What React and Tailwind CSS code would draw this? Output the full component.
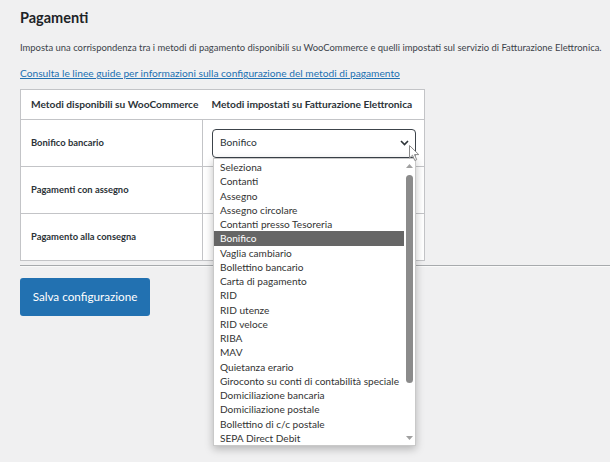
import React from "react";

const OPTIONS = [
  "Seleziona",
  "Contanti",
  "Assegno",
  "Assegno circolare",
  "Contanti presso Tesoreria",
  "Bonifico",
  "Vaglia cambiario",
  "Bollettino bancario",
  "Carta di pagamento",
  "RID",
  "RID utenze",
  "RID veloce",
  "RIBA",
  "MAV",
  "Quietanza erario",
  "Giroconto su conti di contabilità speciale",
  "Domiciliazione bancaria",
  "Domiciliazione postale",
  "Bollettino di c/c postale",
  "SEPA Direct Debit",
];

const ROWS = ["Bonifico bancario", "Pagamenti con assegno", "Pagamento alla consegna"];

function Dropdown() {
  return (
    <div className="absolute left-[10px] top-[38px] z-20 flex w-[203px] border border-[#c9c9c9] bg-white shadow-[0_3px_8px_rgba(0,0,0,0.25)]">
      <ul className="flex-1 pt-px">
        {OPTIONS.map((o) => (
          <li
            key={o}
            className={`flex h-[14.25px] items-center whitespace-nowrap pl-[6px] text-[10.1px] leading-none ${
              o === "Bonifico" ? "bg-[#666666] text-white" : "text-[#333]"
            }`}
          >
            {o}
          </li>
        ))}
      </ul>
      {/* scrollbar */}
      <div className="flex w-[11px] flex-col items-center py-[5px]">
        <svg width="7" height="4" viewBox="0 0 7 4">
          <path d="M0 4 L3.5 0 L7 4 Z" fill="#a0a0a0" />
        </svg>
        <div className="mt-[7px] h-[208px] w-[7px] rounded-full bg-[#8b8b8b]" />
        <div className="flex-1" />
        <svg width="7" height="4" viewBox="0 0 7 4">
          <path d="M0 0 L3.5 4 L7 0 Z" fill="#a0a0a0" />
        </svg>
      </div>
    </div>
  );
}

export default function App() {
  return (
    <div className="relative h-[462px] w-[610px] overflow-hidden bg-[#f0f0f1] font-['Lato',sans-serif] text-[#1d2327]">
      <div className="px-5 pt-[6px]">
        <h2 className="text-[14.5px] font-bold leading-[24px]">Pagamenti</h2>
        <p className="mt-[10px] whitespace-nowrap text-[9.45px] leading-[16px] text-[#3c434a]">
          Imposta una corrispondenza tra i metodi di pagamento disponibili su WooCommerce e quelli impostati sul servizio di Fatturazione Elettronica.
        </p>
        <a href="#" className="mt-[9px] block whitespace-nowrap text-[10.2px] leading-[16px] text-[#2271b1] underline">
          Consulta le linee guide per informazioni sulla configurazione del metodi di pagamento
        </a>

        <table className="mt-[8px] w-[405px] table-fixed border-collapse border border-[#c3c4c7] bg-white">
          <thead>
            <tr className="h-[30px] border-b border-[#c3c4c7]">
              <th className="w-[182px] whitespace-nowrap pl-[10px] text-left text-[10.2px] font-bold text-[#2c3338]">
                Metodi disponibili su WooCommerce
              </th>
              <th className="whitespace-nowrap pl-[9px] text-left text-[10.2px] font-bold text-[#2c3338]">
                Metodi impostati su Fatturazione Elettronica
              </th>
            </tr>
          </thead>
          <tbody>
            {ROWS.map((r, i) => (
              <tr key={r} className="h-[47px] border-b border-[#c3c4c7]">
                <td className="whitespace-nowrap border-r border-[#c3c4c7] pl-[10px] text-[9.4px] font-bold text-[#2c3338]">{r}</td>
                <td className="relative pl-[9px]">
                  {i === 0 && (
                    <>
                      <div className="flex h-[29px] w-[204px] items-center justify-between rounded-[4px] border border-[#3c434a] bg-white pl-[7px] pr-[6px] text-[10.2px] text-[#2c3338]">
                        <span>Bonifico</span>
                        <svg width="9" height="6" viewBox="0 0 9 6">
                          <path d="M1 1 L4.5 4.5 L8 1" fill="none" stroke="#2c3338" strokeWidth="1.6" />
                        </svg>
                      </div>
                      <Dropdown />
                      {/* mouse cursor */}
                      <svg className="absolute left-[206px] top-[25px] z-30" width="11" height="17" viewBox="0 0 11 17">
                        <path d="M0.5 0.5 L0.5 13 L3.5 10.2 L5.8 15.5 L7.7 14.7 L5.5 9.6 L9.8 9.6 Z" fill="#fff" stroke="#8a8a8a" strokeWidth="1" />
                      </svg>
                    </>
                  )}
                </td>
              </tr>
            ))}
          </tbody>
        </table>
      </div>

      <div className="ml-5 mt-[4px] border-t border-[#a7aaad] border-b border-b-[#fafafa]" />

      <div className="px-5 pt-[11px]">
        <button className="h-[38px] w-[130px] rounded-[3px] bg-[#2271b1] text-[11.7px] text-white">
          Salva configurazione
        </button>
      </div>
    </div>
  );
}
